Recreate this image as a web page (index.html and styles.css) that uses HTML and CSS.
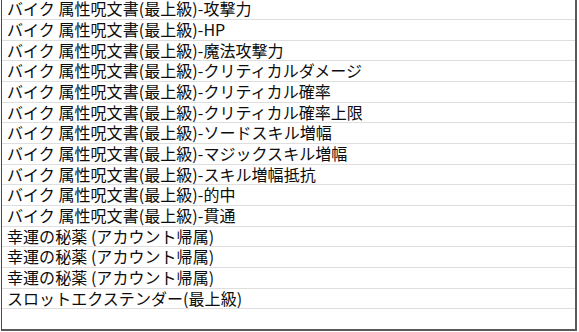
FILE: index.html
```html
<!DOCTYPE html>
<html lang="ja">
<head>
<meta charset="utf-8">
<link rel="stylesheet" href="styles.css">
</head>
<body>
<div class="sheet">
  <div class="row">バイク 属性呪文書(最上級)-攻撃力</div>
  <div class="row">バイク 属性呪文書(最上級)-HP</div>
  <div class="row">バイク 属性呪文書(最上級)-魔法攻撃力</div>
  <div class="row">バイク 属性呪文書(最上級)-クリティカルダメージ</div>
  <div class="row">バイク 属性呪文書(最上級)-クリティカル確率</div>
  <div class="row">バイク 属性呪文書(最上級)-クリティカル確率上限</div>
  <div class="row">バイク 属性呪文書(最上級)-ソードスキル増幅</div>
  <div class="row">バイク 属性呪文書(最上級)-マジックスキル増幅</div>
  <div class="row">バイク 属性呪文書(最上級)-スキル増幅抵抗</div>
  <div class="row">バイク 属性呪文書(最上級)-的中</div>
  <div class="row">バイク 属性呪文書(最上級)-貫通</div>
  <div class="row">幸運の秘薬 (アカウント帰属)</div>
  <div class="row">幸運の秘薬 (アカウント帰属)</div>
  <div class="row">幸運の秘薬 (アカウント帰属)</div>
  <div class="row">スロットエクステンダー(最上級)</div>
  <div class="row empty"></div>
</div>
</body>
</html>
```
FILE: styles.css
```css
html, body {
  margin: 0;
  padding: 0;
  background: #ffffff;
}
body {
  padding-left: 1px;
  overflow: hidden;
  height: 332px;
}
.sheet {
  width: 573px;
  margin-top: -0.66px;
  border-left: 1px solid #4a4a4a;
  border-right: 2px solid #5a5a5a;
  border-bottom: 2px solid #5a5a5a;
  font-family: "Noto Sans CJK JP", "Noto Sans", sans-serif;
  font-size: 16px;
  letter-spacing: 0.05px;
  color: #0d0d0d;
}
.row {
  height: 19.66px;
  line-height: 19.66px;
  border-bottom: 1px solid #dedede;
  padding-left: 5px;
  white-space: nowrap;
}
.row.empty {
  height: 19.7px;
  border-bottom: none;
}
```
